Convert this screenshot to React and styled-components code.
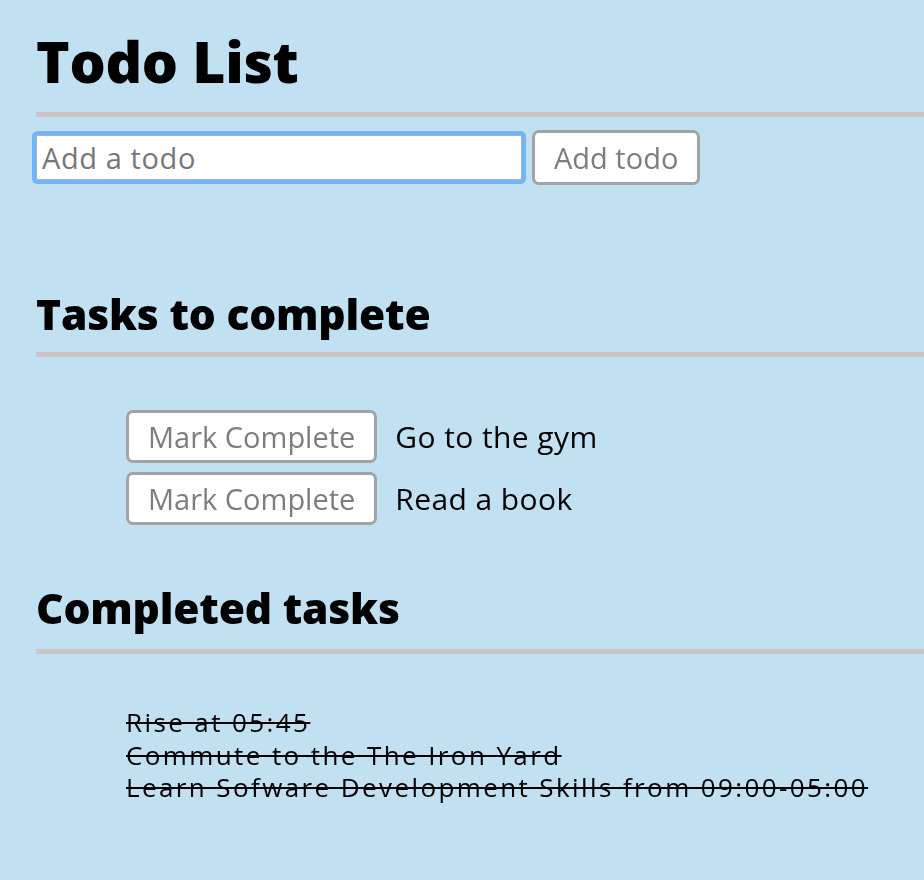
import React from "react";
import styled, { createGlobalStyle } from "styled-components";

const GlobalStyle = createGlobalStyle`
  body {
    margin: 0;
    background: #c1e0f2;
    font-family: "Open Sans", "Liberation Sans", sans-serif;
    color: #000;
  }
`;

const Page = styled.div`
  padding: 29px 0 60px 36px;
`;

const Title = styled.h1`
  margin: 0;
  font-size: 57px;
  font-weight: 800;
  line-height: 64px;
  letter-spacing: -0.3px;
`;

const Rule = styled.div`
  height: 5px;
  background: #cbc5c5;
  margin-top: ${(p) => p.$top || 18}px;
`;

const AddForm = styled.form`
  display: flex;
  align-items: center;
  gap: 10px;
  margin-top: 13px;
`;

const TodoInput = styled.input`
  box-sizing: border-box;
  width: 486px;
  height: 45px;
  padding: 0 5px;
  border: 1px solid #9fb6cc;
  border-radius: 2px;
  box-shadow: 0 0 0 4px #72b4f8;
  background: #fff;
  font-family: "Open Sans", "Liberation Sans", sans-serif;
  font-size: 29px;
  letter-spacing: 0.6px;
  outline: none;

  &::placeholder {
    color: #777;
  }
`;

const Button = styled.button`
  box-sizing: border-box;
  height: ${(p) => p.$h || 55}px;
  padding: 0 19px;
  border: 3px solid #a3a3a3;
  border-radius: 7px;
  background: #fff;
  color: #7d7d7d;
  font-family: "Open Sans", "Liberation Sans", sans-serif;
  font-size: 29px;
  cursor: pointer;
`;

const SectionTitle = styled.h2`
  margin: ${(p) => p.$top}px 0 0;
  font-size: 42.5px;
  font-weight: 800;
  line-height: 50px;
  letter-spacing: -0.2px;
`;

const TaskList = styled.ul`
  list-style: none;
  margin: 53px 0 0;
  padding: 0 0 0 90px;
  display: flex;
  flex-direction: column;
  gap: 9px;
`;

const TaskRow = styled.li`
  display: flex;
  align-items: center;
  gap: 18px;
`;

const TaskText = styled.span`
  font-size: 30px;
  letter-spacing: 0.4px;
`;

const DoneList = styled.ul`
  list-style: none;
  margin: 52px 0 0;
  padding: 0 0 0 90px;
`;

const DoneItem = styled.li`
  font-size: 26px;
  line-height: 32.5px;
  letter-spacing: 2.4px;
  text-decoration: line-through;
  text-decoration-thickness: 2px;
`;

const tasks = ["Go to the gym", "Read a book"];
const done = [
  "Rise at 05:45",
  "Commute to the The Iron Yard",
  "Learn Sofware Development Skills from 09:00-05:00",
];

export default function App() {
  return (
    <Page>
      <GlobalStyle />
      <Title>Todo List</Title>
      <Rule $top={19} />
      <AddForm onSubmit={(e) => e.preventDefault()}>
        <TodoInput placeholder="Add a todo" autoFocus />
        <Button type="submit">Add todo</Button>
      </AddForm>

      <SectionTitle $top={104}>Tasks to complete</SectionTitle>
      <Rule $top={13} />
      <TaskList>
        {tasks.map((t) => (
          <TaskRow key={t}>
            <Button $h={53}>Mark Complete</Button>
            <TaskText>{t}</TaskText>
          </TaskRow>
        ))}
      </TaskList>

      <SectionTitle $top={58}>Completed tasks</SectionTitle>
      <Rule $top={16} />
      <DoneList>
        {done.map((t) => (
          <DoneItem key={t}>{t}</DoneItem>
        ))}
      </DoneList>
    </Page>
  );
}
